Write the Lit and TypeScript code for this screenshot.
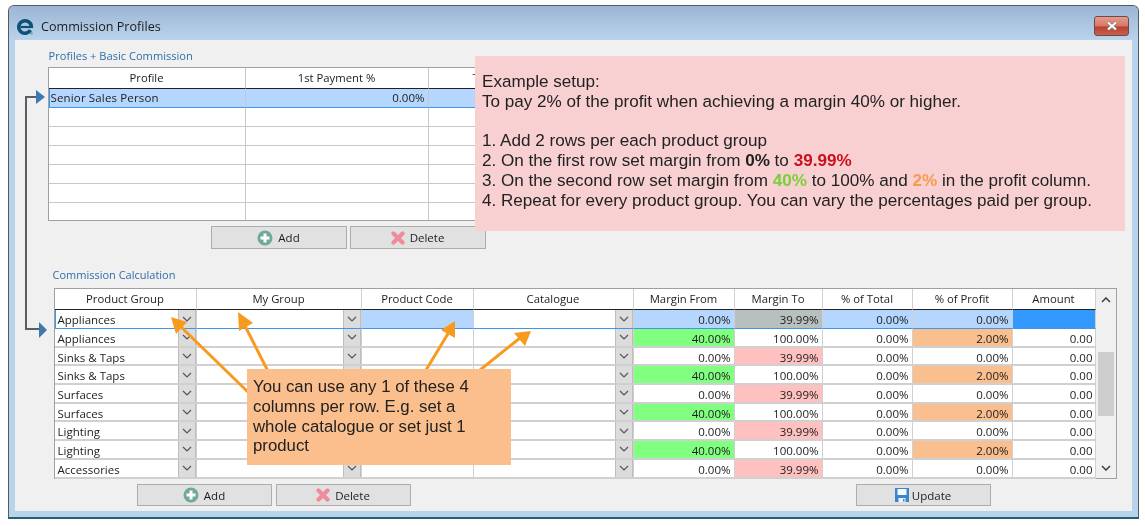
import { LitElement, html, css, svg } from "lit";
import { customElement } from "lit/decorators.js";
import { classMap } from "lit/directives/class-map.js";

const chevron = html`<svg class="chev" viewBox="0 0 10 6" width="10" height="6"><path d="M1 1 L5 5 L9 1" fill="none" stroke="#555" stroke-width="1.2"/></svg>`;

const addIcon = html`<svg viewBox="0 0 16 16" width="16" height="16"><circle cx="8" cy="8" r="7.5" fill="#6fa99a"/><path d="M8 3.5V12.5M3.5 8H12.5" stroke="#fff" stroke-width="3"/></svg>`;
const delIcon = html`<svg viewBox="0 0 14 14" width="14" height="14"><path d="M2.5 2.5L11.5 11.5M11.5 2.5L2.5 11.5" stroke="#ee8c9c" stroke-width="4.2" stroke-linecap="round"/></svg>`;
const saveIcon = html`<svg viewBox="0 0 14 14" width="14" height="14"><path d="M0 0H14V14H0Z" fill="#3b85cf"/><path d="M2.5 1H11.5V7H2.5Z" fill="#f6f9fc"/><path d="M3.5 10H10.5V14H3.5Z" fill="#eef3f8"/><path d="M8 11H9.5V13.5H8Z" fill="#3b85cf"/></svg>`;

type Row = { name: string; from: string; to: string; profit: string };
const names = ["Appliances", "Appliances", "Sinks & Taps", "Sinks & Taps", "Surfaces", "Surfaces", "Lighting", "Lighting", "Accessories"];
const rows: Row[] = names.map((name, i) =>
  i % 2 === 0
    ? { name, from: "0.00%", to: "39.99%", profit: "0.00%" }
    : { name, from: "40.00%", to: "100.00%", profit: "2.00%" }
);

@customElement("app-root")
export class AppRoot extends LitElement {
  static styles = css`
    :host { display: block; width: 1145px; height: 526px; background: #fff; overflow: hidden; font-family: "Open Sans", "Noto Sans", sans-serif; position: relative; }
    .page { padding: 5px 6px 7px 8px; height: 526px; box-sizing: border-box; filter: blur(0.45px); position: relative; }
    .win { height: 100%; box-sizing: border-box; border: 1.5px solid #555a60; border-bottom: 2px solid #24606e; border-radius: 6px 6px 0 0; background: #bad3ec; display: flex; flex-direction: column; padding: 0 6px 6px 6px; }
    .title { height: 34px; flex: none; box-sizing: border-box; margin: 0 -6px; padding: 7px 9px 0 7px; display: flex; align-items: center; gap: 7px; background: linear-gradient(#9cb5d3, #bad3ec); border-radius: 5px 5px 0 0; font-size: 12.6px; color: #1c1c1c; }
    .title span { flex: 1; }
    .close { width: 35px; height: 20px; margin-bottom: 2px; box-sizing: border-box; border: 1px solid #6b4a4e; border-radius: 3px; background: linear-gradient(#e79b8c 0%, #d77766 50%, #b8412e 55%, #c9604c 100%); display: flex; align-items: center; justify-content: center; }
    .client { flex: 1; background: #f0f0f0; padding: 10px 7.5px 0 32.5px; display: flex; flex-direction: column; font-size: 11.5px; color: #1c1c1c; }
    .label { color: #2f6ea8; font-size: 11.1px; line-height: 12px; height: 12px; margin-left: 1px; }
    .t1 { margin-top: 5px; height: 154px; width: 1077px; box-sizing: border-box; border: 1px solid #a0a0a0; background: #fff; display: grid; grid-template-columns: 197px 183px 183px 1fr; grid-template-rows: 21px 19px repeat(5, 19px) 18px; overflow: hidden; }
    .c { border-right: 1px solid #c8c8c8; border-bottom: 1px solid #c8c8c8; box-sizing: border-box; padding: 0 3px; line-height: 17px; white-space: nowrap; overflow: hidden; font-size: 11.5px; position: relative; }
    .h { background: #fff; text-align: center; border-bottom: 1.5px solid #222; line-height: 20px; color: #1c1c1c; font-size: 11.3px; }
    .t1 .cut { text-align: left; padding-left: 44px; }
    .r { text-align: right; }
    .sel1 { background: #b5d7ff; border-bottom: 1.5px solid #3d97e8; }
    .sel1.first { border-left: 1.5px solid #3d97e8; padding-left: 1px; letter-spacing: 0.15px; }
    .btns { display: flex; gap: 3px; margin-top: 5px; margin-left: 163px; height: 23px; }
    .btn { width: 136px; height: 23px; box-sizing: border-box; border: 1px solid #adadad; background: #e1e1e1; display: flex; align-items: center; justify-content: center; gap: 5px; color: #1c1c1c; font-size: 11.5px; }
    .label2 { margin-top: 20px; margin-bottom: 1px; margin-left: 5px; font-size: 11px; }
    .t2 { margin-top: 6px; margin-left: 6px; width: 1063px; height: 191px; box-sizing: border-box; border: 1px solid #a0a0a0; background: #f0f0f0; display: flex; }
    .grid { width: 1041px; display: grid; grid-template-columns: 142px 165px 112px 160px 101px 88px 90px 100px 83px; grid-template-rows: 21px 19px repeat(8, 18.7px); }
    .grid .c { padding: 0 3px; line-height: 19px; background: #fff; border-color: #d0d0d0; border-bottom-width: 2px; }
    .grid .h { line-height: 20px; border-bottom: 1.5px solid #222; text-align: center; }
    .grid .sel { background: #b5d7ff; }
    .grid .top { border-bottom: 1.5px solid #3d97e8; }
    .grid .gr { background: #80ff80; }
    .grid .pk { background: #ffc0c0; }
    .grid .or { background: #f9bf8f; }
    .grid .gy { background: #b8bfbf; }
    .grid .bl { background: #3399ff; }
    .grid .amt { padding-right: 2px; }
    .grid .lead { border-left: 1.5px solid #3d97e8; padding-left: 2px; }
    .combo { padding-right: 18px !important; }
    .dd { position: absolute; right: 0; top: 0; bottom: 0; width: 18px; background: #dcdcdc; border-left: 1px solid #bdbdbd; border-right: 1px solid #bdbdbd; box-sizing: border-box; display: flex; align-items: center; justify-content: center; }
    .sb { flex: 1; display: flex; flex-direction: column; position: relative; background: #f0f0f0; }
    .sb .arrow { height: 21px; display: flex; align-items: center; justify-content: center; }
    .sb .track { flex: 1; padding-top: 42px; display: flex; flex-direction: column; }
    .sb .thumb { width: 16px; margin-left: 2px; height: 64px; background: #cdcdcd; }
    .sb .down { height: 20px; display: flex; align-items: center; justify-content: center; }
    .btns2 { display: flex; margin-top: 5px; margin-left: 89px; height: 22px; gap: 4px; }
    .btns2 .btn { height: 22px; width: 135px; }
    .btns2 .up { margin-left: 441px; gap: 3px; }
    .note { position: absolute; box-sizing: border-box; font-family: "Liberation Sans", Arial, sans-serif; line-height: 19.8px; color: #222; }
    .pinkn { left: 475px; top: 56px; width: 650px; height: 175px; background: #f8d0d2; padding: 16px 7px; font-size: 17.1px; }
    .orn { left: 247px; top: 369px; width: 264px; height: 96px; background: #fbbf8e; padding: 8px 28px 8px 6px; font-size: 16.8px; }
    .ann { position: absolute; left: 0; top: 0; pointer-events: none; }
    b.red { color: #c9101c; } b.grn { color: #7bcf3a; font-weight: 700; } b.org { color: #f79a4c; font-weight: 700; }
  `;

  private topRows() {
    const out = [];
    for (let i = 0; i < 6; i++) {
      out.push(html`<div class="c"></div><div class="c"></div><div class="c"></div><div class="c"></div>`);
    }
    return out;
  }

  private gridRow(r: Row, i: number) {
    const even = i % 2 === 0;
    const first = i === 0;
    const cell = (cls: Record<string, boolean>, text: string) =>
      html`<div class=${classMap({ c: true, r: true, top: first, ...cls })}>${text}</div>`;
    const combo = (text: string, lead = false) =>
      html`<div class=${classMap({ c: true, combo: true, top: first, lead })}>${text}<div class="dd">${chevron}</div></div>`;
    return html`
      ${combo(r.name, first)}${combo("")}
      <div class=${classMap({ c: true, top: first, sel: first })}></div>
      ${combo("")}
      ${cell({ sel: first, gr: !even }, r.from)}
      ${cell({ gy: first, pk: !first && even }, r.to)}
      ${cell({ sel: first }, "0.00%")}
      ${cell({ sel: first, or: !even }, r.profit)}
      ${cell({ bl: first, amt: true }, first ? "" : "0.00")}
    `;
  }

  render() {
    return html`
      <div class="page">
        <div class="win">
          <div class="title">
            <svg viewBox="0 0 18 18" width="18" height="18"><circle cx="9" cy="9" r="6.3" fill="none" stroke="#0e5178" stroke-width="3.6" stroke-dasharray="36.3 3.3" transform="rotate(30 9 9)"/><path d="M4.5 9H15" stroke="#0e5178" stroke-width="2.2"/><circle cx="15.5" cy="15.5" r="1.2" fill="#5cae8f"/></svg>
            <span>Commission Profiles</span>
            <div class="close"><svg viewBox="0 0 14 10" width="14" height="10"><path d="M3 1.5L11 8.5M11 1.5L3 8.5" stroke="#777" stroke-width="3.4"/><path d="M3 1.5L11 8.5M11 1.5L3 8.5" stroke="#fff" stroke-width="2"/></svg></div>
          </div>
          <div class="client">
            <div class="label">Profiles + Basic Commission</div>
            <div class="t1">
              <div class="c h">Profile</div><div class="c h">1st Payment %</div><div class="c h cut">T</div><div class="c h"></div>
              <div class="c sel1 first">Senior Sales Person</div><div class="c sel1 r">0.00%</div><div class="c sel1"></div><div class="c sel1"></div>
              ${this.topRows()}
            </div>
            <div class="btns">
              <div class="btn">${addIcon}Add</div>
              <div class="btn">${delIcon}Delete</div>
            </div>
            <div class="label label2">Commission Calculation</div>
            <div class="t2">
              <div class="grid">
                ${["Product Group", "My Group", "Product Code", "Catalogue", "Margin From", "Margin To", "% of Total", "% of Profit", "Amount"].map((h) => html`<div class="c h">${h}</div>`)}
                ${rows.map((r, i) => this.gridRow(r, i))}
              </div>
              <div class="sb">
                <div class="arrow"><svg viewBox="0 0 10 6" width="10" height="6"><path d="M1 5L5 1L9 5" fill="none" stroke="#444" stroke-width="1.6"/></svg></div>
                <div class="track"><div class="thumb"></div></div>
                <div class="down"><svg viewBox="0 0 10 6" width="10" height="6"><path d="M1 1L5 5L9 1" fill="none" stroke="#444" stroke-width="1.6"/></svg></div>
              </div>
            </div>
            <div class="btns2">
              <div class="btn">${addIcon}Add</div>
              <div class="btn">${delIcon}Delete</div>
              <div class="btn up">${saveIcon}Update</div>
            </div>
          </div>
        </div>
        <svg class="ann" width="1145" height="526" viewBox="0 0 1145 526">
          ${svg`
            <path d="M37 97H26V329H40" fill="none" stroke="#5a5f66" stroke-width="2"/>
            <path d="M36 90L45 97L36 104Z" fill="#3d79ad"/>
            <path d="M39 322L47 330L39 338Z" fill="#3d79ad"/>
            <g stroke="#f79a1e" stroke-width="3" fill="#f79a1e">
              <path d="M250 394L178 324" fill="none"/><path d="M171 317L187 322L176 334Z" stroke="none"/>
              <path d="M275 385L243 322" fill="none"/><path d="M238 312L253 323L239 331Z" stroke="none"/>
              <path d="M420 380L449 332" fill="none"/><path d="M455 321L455 338L441 330Z" stroke="none"/>
              <path d="M470 378L520 338" fill="none"/><path d="M531 331L525 346L514 333Z" stroke="none"/>
            </g>
          `}
        </svg>
        <div class="note pinkn">Example setup:<br />To pay 2% of the profit when achieving a margin 40% or higher.<br /><br />1. Add 2 rows per each product group<br />2. On the first row set margin from <b>0%</b> to <b class="red">39.99%</b><br />3. On the second row set margin from <b class="grn">40%</b> to 100% and <b class="org">2%</b> in the profit column.<br />4. Repeat for every product group. You can vary the percentages paid per group.</div>
        <div class="note orn">You can use any 1 of these 4 columns per row. E.g. set a whole catalogue or set just 1 product</div>
      </div>
    `;
  }
}
